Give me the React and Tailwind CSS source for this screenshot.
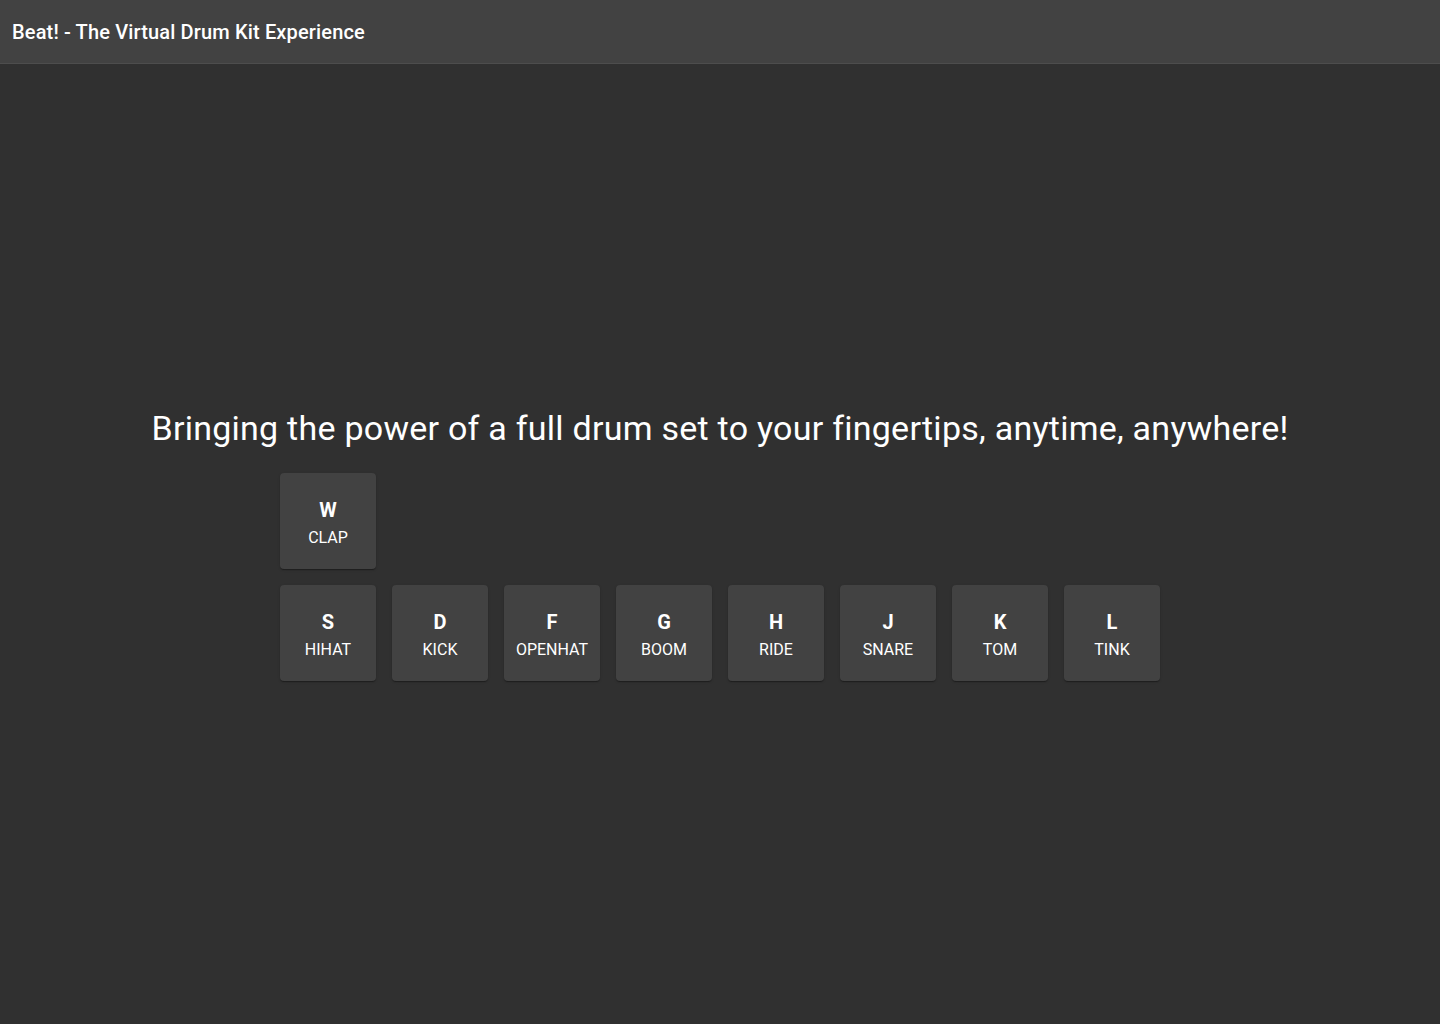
const TOP_ROW = [{ key: 'W', sound: 'CLAP' }]

const BOTTOM_ROW = [
  { key: 'S', sound: 'HIHAT' },
  { key: 'D', sound: 'KICK' },
  { key: 'F', sound: 'OPENHAT' },
  { key: 'G', sound: 'BOOM' },
  { key: 'H', sound: 'RIDE' },
  { key: 'J', sound: 'SNARE' },
  { key: 'K', sound: 'TOM' },
  { key: 'L', sound: 'TINK' },
]

function DrumPad({ letter, sound }) {
  return (
    <button className="flex h-24 w-24 flex-col items-center justify-center rounded bg-[#424242] pt-px text-white shadow-[0_2px_1px_-1px_rgba(0,0,0,0.2),0_1px_1px_0_rgba(0,0,0,0.14),0_1px_3px_0_rgba(0,0,0,0.12)]">
      <span className="text-[20px] font-bold leading-[32px]">{letter}</span>
      <span className="text-[16px] leading-[24px]">{sound}</span>
    </button>
  )
}

export default function App() {
  return (
    <div className="flex min-h-screen flex-col bg-[#303030] font-['Roboto',sans-serif] text-white">
      <header className="flex h-16 shrink-0 items-center border-b border-[#4d4d4d] bg-[#424242] px-3">
        <h1 className="text-[20px] font-medium tracking-[0.15px]">Beat! - The Virtual Drum Kit Experience</h1>
      </header>

      <main className="flex flex-1 flex-col items-center justify-center">
        <h2 className="text-[34px] leading-[42px] tracking-[0.25px]">
          Bringing the power of a full drum set to your fingertips, anytime, anywhere!
        </h2>
        <div className="mt-6 grid grid-cols-[repeat(8,96px)] gap-4">
          {TOP_ROW.map((pad) => (
            <DrumPad key={pad.key} letter={pad.key} sound={pad.sound} />
          ))}
          <div className="col-span-7" />
          {BOTTOM_ROW.map((pad) => (
            <DrumPad key={pad.key} letter={pad.key} sound={pad.sound} />
          ))}
        </div>
      </main>
    </div>
  )
}
